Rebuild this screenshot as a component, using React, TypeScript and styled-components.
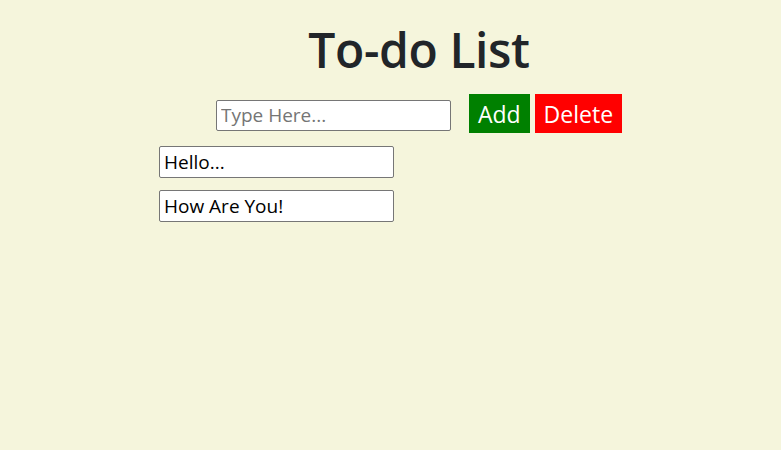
import React, { useState } from "react";
import styled, { createGlobalStyle } from "styled-components";

const Global = createGlobalStyle`
  html, body { margin: 0; padding: 0; background: #f5f5dc; }
  body { font-family: "Open Sans", "Noto Sans", sans-serif; color: #212529; }
`;

const Page = styled.div`
  min-height: 450px;
  background: #f5f5dc;
  padding-top: 19px;
`;

const Header = styled.div`
  display: flex;
  flex-direction: column;
  align-items: center;
  padding-left: 57px;
`;

const Title = styled.h1`
  margin: 0;
  font-size: 48px;
  font-weight: 600;
  line-height: 61px;
  letter-spacing: -0.4px;
  color: #212529;
`;

const Row = styled.div`
  display: flex;
  align-items: center;
  margin-top: 14px;
`;

const TextInput = styled.input`
  box-sizing: border-box;
  width: 235px;
  height: 31px;
  padding: 0 4px;
  font-family: inherit;
  font-size: 19px;
  border: 1px solid #767676;
  border-radius: 2px;
  background: #fff;
  color: #111;
  &::placeholder { color: #757575; }
`;

const MainInput = styled(TextInput)`
  margin-top: 3px;
`;

const Button = styled.button<{ $bg: string }>`
  height: 39px;
  border: none;
  padding: 0 9px;
  font-family: inherit;
  font-size: 23px;
  color: #fff;
  background: ${(p) => p.$bg};
  margin-left: ${(p) => (p.$bg === "green" ? "18px" : "5px")};
  cursor: pointer;
`;

const List = styled.div`
  display: flex;
  flex-direction: column;
  gap: 12px;
  padding-left: 159px;
  margin-top: 13px;
`;

const Item = styled(TextInput)`
  height: 32px;
  color: #000;
`;

export default function App() {
  const [items] = useState(["Hello...", "How Are You!"]);
  return (
    <Page>
      <Global />
      <Header>
        <Title>To-do List</Title>
        <Row>
          <MainInput placeholder="Type Here..." />
          <Button $bg="green">Add</Button>
          <Button $bg="red">Delete</Button>
        </Row>
      </Header>
      <List>
        {items.map((t) => (
          <Item key={t} defaultValue={t} />
        ))}
      </List>
    </Page>
  );
}
